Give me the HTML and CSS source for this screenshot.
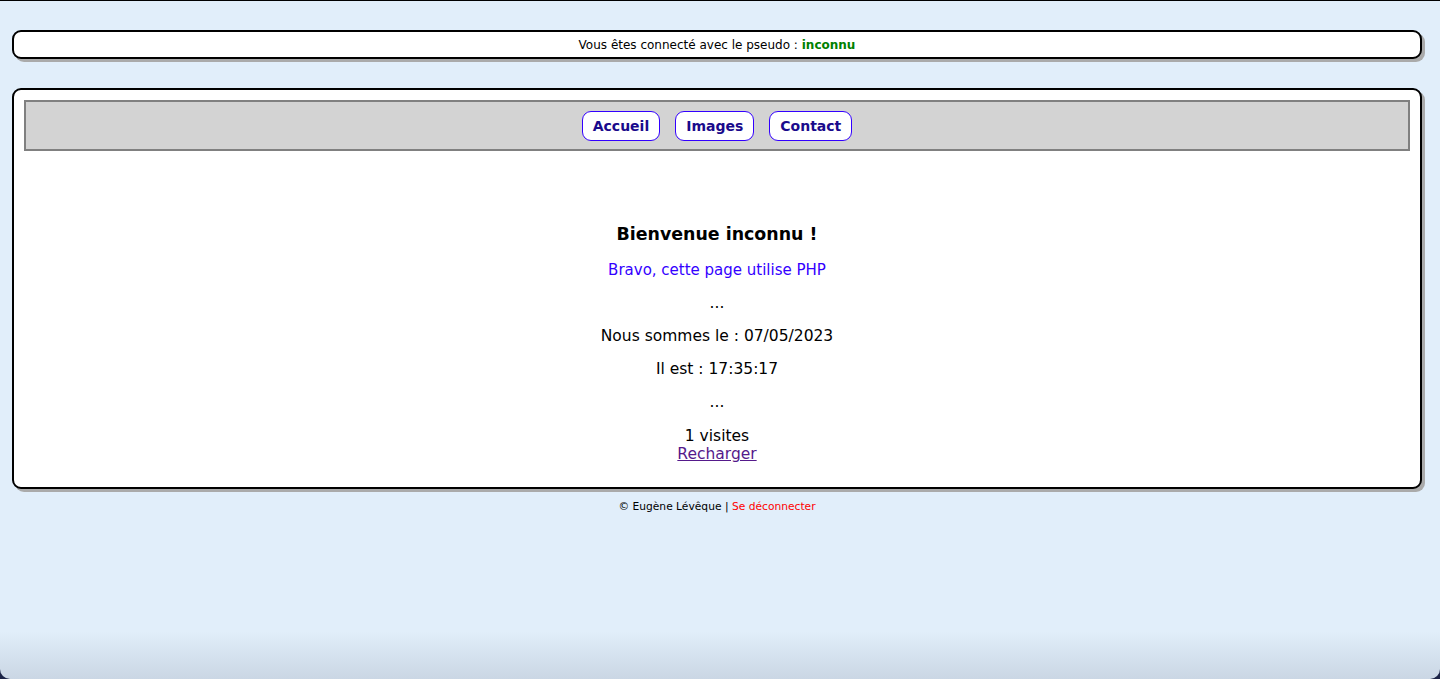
FILE: index.html
```html
<!DOCTYPE html>
<html lang="fr">
<head>
<meta charset="utf-8">
<title>Accueil</title>
<link rel="stylesheet" href="styles.css">
</head>
<body>
<div class="page">
  <header class="userbar">Vous êtes connecté avec le pseudo : <strong class="pseudo">inconnu</strong></header>
  <main class="panel">
    <nav class="menu">
      <a class="btn" href="#">Accueil</a>
      <a class="btn" href="#">Images</a>
      <a class="btn" href="#">Contact</a>
    </nav>
    <section class="content">
      <h2 class="title">Bienvenue inconnu !</h2>
      <p class="php">Bravo, cette page utilise PHP</p>
      <p>...</p>
      <p>Nous sommes le : 07/05/2023</p>
      <p>Il est : 17:35:17</p>
      <p>...</p>
      <p class="visits">1 visites<br><a class="reload" href="#">Recharger</a></p>
    </section>
  </main>
  <footer class="foot">© Eugène Lévêque | <a class="logout" href="#">Se déconnecter</a></footer>
</div>
</body>
</html>
```
FILE: styles.css
```css
html {
  margin: 0;
  background: #1c2447;
}
body {
  margin: 0;
  font-family: "DejaVu Sans", Verdana, sans-serif;
  color: #000;
}
.page {
  box-sizing: border-box;
  height: 100vh;
  overflow: hidden;
  border-top: 1px solid #000;
  border-radius: 0 0 10px 10px;
  padding: 29px 18px 0 12px;
  background: linear-gradient(to bottom, #e1eefa calc(100% - 48px), #cad6e4 100%);
}
.userbar {
  box-sizing: border-box;
  height: 29px;
  border: 2px solid #000;
  border-radius: 9px;
  background: #fff;
  box-shadow: 3px 3px 0 #aaaaaa;
  font-size: 12px;
  line-height: 27px;
  text-align: center;
}
.pseudo {
  color: #008000;
}
.panel {
  margin-top: 29px;
  border: 2px solid #000;
  border-radius: 9px;
  background: #fff;
  box-shadow: 3px 3px 0 #aaaaaa;
  padding: 10px 10px 24px;
}
.menu {
  box-sizing: border-box;
  height: 51px;
  border: 2px solid #808080;
  background: #d3d3d3;
  display: flex;
  justify-content: center;
  align-items: center;
  gap: 15px;
  padding-top: 1px;
}
.btn {
  box-sizing: border-box;
  height: 30px;
  padding: 0 10px;
  border: 1px solid #3300ff;
  border-radius: 9px;
  background: #fff;
  color: #1a0a8c;
  font-weight: bold;
  font-size: 14px;
  line-height: 28px;
  text-decoration: none;
}
.content {
  text-align: center;
  padding-top: 72px;
  font-size: 15.5px;
}
.title {
  margin: 0 0 17px;
  font-size: 17.4px;
  line-height: 22px;
}
.content p {
  margin: 16px 0;
  line-height: 17px;
}
.content .php {
  margin-top: 0;
  font-size: 15px;
  color: #3300ff;
}
.content .visits {
  margin-bottom: 0;
  line-height: 18px;
}
.reload {
  color: #551a8b;
}
.foot {
  margin-top: 10px;
  text-align: center;
  font-size: 10.7px;
  line-height: 16px;
}
.logout {
  color: #ff0000;
  text-decoration: none;
}
```
